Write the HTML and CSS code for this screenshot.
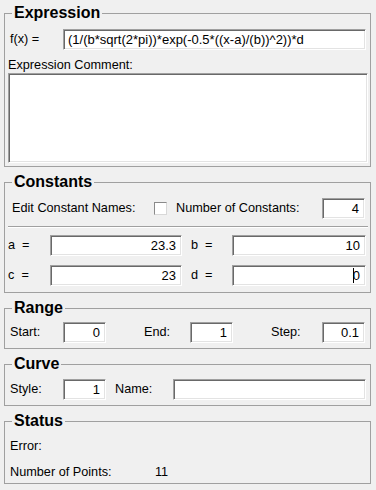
FILE: index.html
```html
<!DOCTYPE html>
<html>
<head>
<meta charset="utf-8">
<link rel="stylesheet" href="styles.css">
</head>
<body>
<div class="app">
  <fieldset class="group g-expr">
    <legend>Expression</legend>
    <div class="row fx-row">
      <span class="lbl w53">f(x) =</span>
      <div class="field left grow">(1/(b*sqrt(2*pi))*exp(-0.5*((x-a)/(b))^2))*d</div>
    </div>
    <div class="comment-label">Expression Comment:</div>
    <div class="textarea"></div>
  </fieldset>

  <fieldset class="group g-const">
    <legend>Constants</legend>
    <div class="row const-top">
      <span class="lbl w142">Edit Constant Names:</span>
      <span class="check"></span>
      <span class="lbl grow">Number of Constants:</span>
      <div class="field w43">4</div>
    </div>
    <div class="sep"></div>
    <div class="row const-row first">
      <span class="lbl w42">a &nbsp;=</span>
      <div class="field w132">23.3</div>
      <span class="lbl w41 ml9">b &nbsp;=</span>
      <div class="field grow">10</div>
    </div>
    <div class="row const-row second">
      <span class="lbl w42">c &nbsp;=</span>
      <div class="field w132">23</div>
      <span class="lbl w41 ml9">d &nbsp;=</span>
      <div class="field grow"><span class="caret"></span>0</div>
    </div>
  </fieldset>

  <fieldset class="group g-range">
    <legend>Range</legend>
    <div class="row range-row">
      <span class="lbl w53">Start:</span>
      <div class="field w43">0</div>
      <span class="lbl w46 ml38">End:</span>
      <div class="field w43">1</div>
      <span class="lbl w51 ml38">Step:</span>
      <div class="field w43">0.1</div>
    </div>
  </fieldset>

  <fieldset class="group g-curve">
    <legend>Curve</legend>
    <div class="row curve-row">
      <span class="lbl w53">Style:</span>
      <div class="field w43">1</div>
      <span class="lbl w58 ml9">Name:</span>
      <div class="field grow"></div>
    </div>
  </fieldset>

  <fieldset class="group g-status">
    <legend>Status</legend>
    <div class="status-row first">
      <span class="lbl w145">Error:</span>
    </div>
    <div class="status-row second">
      <span class="lbl w145">Number of Points:</span>
      <span class="val">11</span>
    </div>
  </fieldset>
</div>
</body>
</html>
```

FILE: styles.css
```css
* { box-sizing: border-box; }

body {
  margin: 0;
  background: #f0f0f0;
  font-family: "Liberation Sans", Arial, sans-serif;
  font-size: 12.7px;
  color: #000;
}

.app {
  padding: 4px 5px 0 4px;
  display: flex;
  flex-direction: column;
  gap: 6px;
}

.group {
  margin: 0;
  min-width: 0;
  border: 1px solid #a0a0a0;
  padding: 0 2px 5px 3px;
}

.group legend {
  font-size: 16px;
  font-weight: bold;
  line-height: 18px;
  padding: 0 2px;
  margin-left: 4px;
}

.row {
  display: flex;
  align-items: center;
  height: 21px;
}

.lbl {
  flex: none;
  white-space: nowrap;
  line-height: 15px;
}

.grow { flex: 1 1 auto; }
.w41 { width: 41px; }
.w42 { width: 42px; }
.w43 { width: 43px; flex: none; }
.w46 { width: 46px; }
.w51 { width: 51px; }
.w53 { width: 53px; }
.w58 { width: 58px; }
.w132 { width: 132px; flex: none; }
.w142 { width: 142px; }
.w145 { width: 145px; }
.ml9 { margin-left: 9px; }
.ml38 { margin-left: 38px; }

.field {
  height: 21px;
  background: #fff;
  border: 1px solid;
  border-color: #a0a0a0 #ffffff #ffffff #a0a0a0;
  box-shadow: inset 1px 1px #696969, inset -1px -1px #e3e3e3;
  padding: 0 5px;
  display: flex;
  align-items: center;
  justify-content: flex-end;
  font-size: 13px;
  white-space: nowrap;
  overflow: hidden;
}

.field.left {
  justify-content: flex-start;
  padding-left: 4px;
}

.caret {
  width: 1px;
  height: 15px;
  background: #000;
  margin-right: -1px;
}

/* Expression */
.g-expr { padding-bottom: 3px; }
.fx-row { margin-top: 7px; padding: 0 2px; }
.comment-label { margin-top: 8px; line-height: 15px; }
.textarea {
  height: 90px;
  background: #fff;
  border: 1px solid;
  border-color: #a0a0a0 #ffffff #ffffff #a0a0a0;
  box-shadow: inset 1px 1px #696969, inset -1px -1px #e3e3e3;
}

/* Constants */
.g-const { padding-bottom: 6px; }
.const-top { margin-top: 7px; padding: 0 3px 0 4px; }
.check {
  flex: none;
  width: 13px;
  height: 13px;
  background: #fff;
  border: 1px solid;
  border-color: #8a8a8a #d8d8d8 #d8d8d8 #8a8a8a;
  margin-right: 9px;
}
.sep {
  margin-top: 7px;
  height: 2px;
  border-top: 1px solid #a0a0a0;
  border-bottom: 1px solid #ffffff;
}
.const-row { padding-right: 2px; }
.const-row.first { margin-top: 7px; }
.const-row.second { margin-top: 9px; }

/* Range */
.range-row { margin-top: 5px; padding-left: 2px; }

/* Curve */
.curve-row { margin-top: 6px; padding: 0 2px; }

/* Status */
.g-status { padding-bottom: 3px; }
.status-row {
  display: flex;
  line-height: 15px;
  padding-left: 2px;
}
.status-row.first { margin-top: 9px; }
.status-row.second { margin-top: 11px; }
```
